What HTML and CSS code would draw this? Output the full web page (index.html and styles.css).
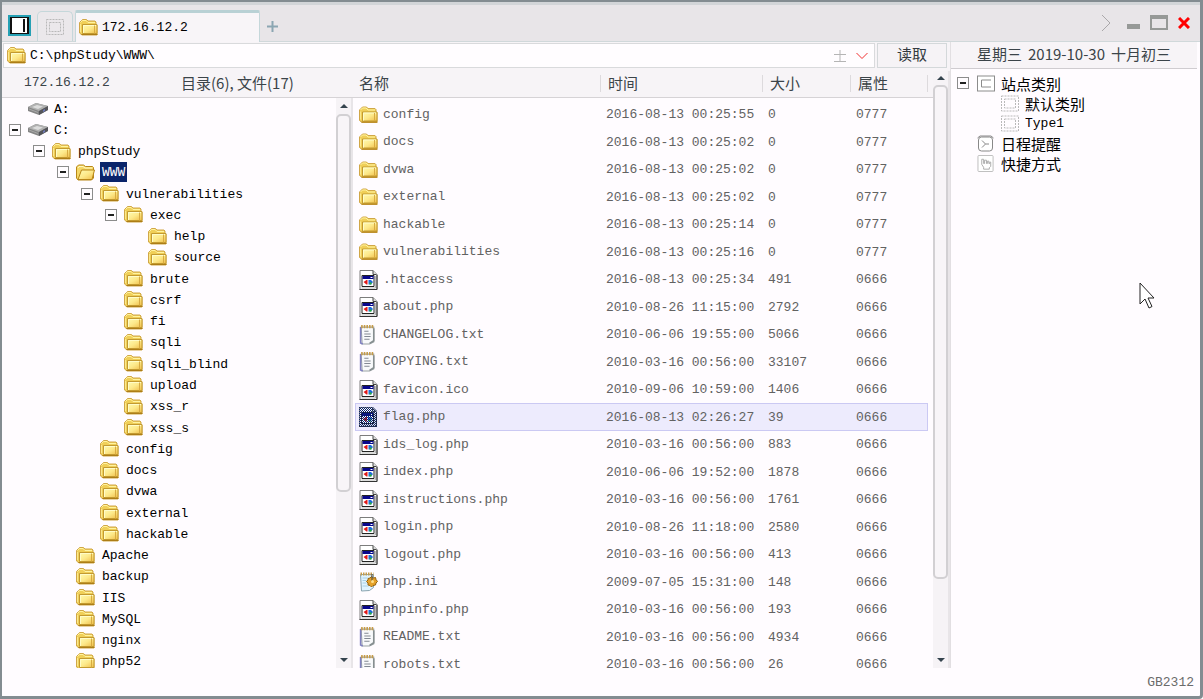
FILE: index.html
```
<!DOCTYPE html>
<html lang="zh-CN">
<head>
  <meta charset="UTF-8">
  <meta name="viewport" content="width=device-width, initial-scale=1.0">
  <title>172.16.12.2</title>
  <link rel="stylesheet" href="styles.css">
</head>
<body>
  <!-- Icons -->
  <svg class="sprite" width="0" height="0" aria-hidden="true">
    <defs>
      <linearGradient id="gold" x1="0" y1="0" x2="1" y2="1">
        <stop offset="0" stop-color="#fffcb4"/>
        <stop offset="0.5" stop-color="#fde98a"/>
        <stop offset="1" stop-color="#f0bd48"/>
      </linearGradient>
      <pattern id="dots" width="2" height="2" patternUnits="userSpaceOnUse">
        <path d="M0 0h1v1H0zM1 1h1v1H1z" fill="#0a246a"/>
      </pattern>
    </defs>
    <symbol id="folder" viewBox="0 0 19 17">
      <path d="M.5 3.500 2.500 1.500 3.500.5h4l1.500 1.500h7l1 1v3h1v10H3L.5 14z" fill="#f0cf58" stroke="#d0a748"/>
      <path d="M1.500 3.500l2-2h3.500l2 2h7" fill="none" stroke="#fff3a0"/>
      <path d="M1.500 5v8" stroke="#fbe88c"/>
      <path d="M3.500 5.500h14.500v9H3.500z" fill="url(#gold)" stroke="#c39a30"/>
      <path d="M4.500 14V6.500H17" fill="none" stroke="#fffcc8"/>
      <path d="M15.500 6.500v8" stroke="#d8ab42"/>
      <path d="M2.500 15.500h16" stroke="#ad7d16"/>
    </symbol>
    <symbol id="folder-open" viewBox="0 0 19 17">
      <path d="M.5 14V3l2-2h5l2 1.500h7l1 1V14l-2 2H2z" fill="#f5d768" stroke="#b98719"/>
      <path d="M2 15.500 5.500 6h13L16 15.500z" fill="url(#gold)" stroke="#b98719"/>
      <path d="M2 4l1-1.500h4l2 1.500h7" fill="none" stroke="#fff9c0"/>
    </symbol>
    <symbol id="drive" viewBox="0 0 20 12">
      <path d="M0 4 8 0l12 3v4l-9 5L0 8z" fill="#858585"/>
      <path d="M0 4 8 0l12 3-9 5z" fill="#b0b0b0"/>
      <path d="M4 4l5-2 6 1.500L10 6z" fill="#dcdcdc"/>
      <path d="M11 8l9-5v4l-9 5z" fill="#55555a"/>
      <path d="M15 7l2-1v2l-2 1z" fill="#6d78b8"/>
      <path d="M1 6l9 3.500" stroke="#a8a8a8"/>
    </symbol>
    <symbol id="app" viewBox="0 0 18 20">
      <path d="M.5.5h13l4 4v15H.5z" fill="#fff" stroke="#7c7c7c"/>
      <path d="M13.500.5V4.500H17" fill="#ddd" stroke="#444"/>
      <path d="M17.500 5v14.500H0" fill="none" stroke="#333"/>
      <path d="M16 6v12H2" fill="none" stroke="#b8b8b8"/>
      <path d="M2.500 5.500h12v11h-12z" fill="#fff" stroke="#222"/>
      <path d="M3 6h11v3H3z" fill="#08088c"/>
      <path d="M11 7h2v1h-2z" fill="#fff"/>
      <path d="M4 12l3-2h1v4.500H7z" fill="#e01818"/>
      <path d="M9 10h2.500l2 2-2 2.500H9z" fill="#1d6ae0"/>
      <path d="M10 12.500h2v2h-2z" fill="#28b428"/>
    </symbol>
    <symbol id="note" viewBox="0 0 18 19">
      <path d="M2 2h12v14l-4 2H3z" fill="#f8f9fb" stroke="#9aa2a4"/>
      <path d="M1.500 2v15l2 1" fill="none" stroke="#8080c0" stroke-width="1.500"/>
      <path d="M14 3v12l-4 2.500" fill="none" stroke="#868e90" stroke-width="1.500"/>
      <path d="M2 1.500h12" stroke="#c69b48" stroke-width="3" stroke-dasharray="1.500 1"/>
      <path d="M5 6h4M5 8.500h6M5 11h6M5 13.500h5" stroke="#838993"/>
    </symbol>
    <symbol id="ini" viewBox="0 0 18 20">
      <path d="M1 2.500h13v13l-4 3L2 19z" fill="#dff3ff" stroke="#8aa4b0"/>
      <path d="M1 2h13" stroke="#c69b48" stroke-width="3" stroke-dasharray="1.500 1"/>
      <path d="M3 6h5M3 8.500h4M3 11h4M3 14h6" stroke="#a9d0e4"/>
      <path d="M12 4.500 14 6l2-.5.5 2 1.500 2-1.500 1.500-.5 2-2.500.5-1.500 1.500-1.500-1.500-2-.5V11L7 9.500l1.500-1.500V6.500l2-.5z" fill="#e5a128" stroke="#94620e"/>
      <path d="M12.500 2v8" stroke="#444"/>
      <circle cx="13" cy="9.500" r="1.500" fill="#ffe08a"/>
    </symbol>
    <symbol id="dashed" viewBox="0 0 18 16">
      <rect x=".5" y=".5" width="17" height="15" fill="none" stroke="#b9b9b9" stroke-dasharray="2 1"/>
      <rect x="3.500" y="3.500" width="11" height="9" fill="none" stroke="#b9b9b9" stroke-dasharray="2 1"/>
    </symbol>
    <symbol id="category" viewBox="0 0 18 16">
      <rect x=".5" y=".5" width="17" height="15" fill="#fff" stroke="#8c8c8c"/>
      <path d="M14 4.500H4.500v7H14" fill="none" stroke="#8c8c8c"/>
    </symbol>
    <symbol id="clock" viewBox="0 0 18 16">
      <rect x="1.500" y="1.500" width="14" height="14" rx="3" fill="#fff" stroke="#888"/>
      <path d="M.5 2.500 3 .5h11l2.500 2" fill="none" stroke="#888"/>
      <path d="M5 5l3.500 3.500L5 12M8.500 8.500H12" fill="none" stroke="#888"/>
    </symbol>
    <symbol id="hand" viewBox="0 0 18 18">
      <rect x=".5" y=".5" width="16" height="17" rx="1" fill="#fff" stroke="#bbb"/>
      <path d="M6.500 15v-2L4.500 10V4.500h2V9h1V5.500h2V9h1V6.500h1.500V9h1V7.500h1V12L12.500 13.500V15z" fill="#fff" stroke="#aaa"/>
    </symbol>
  </svg>

  <div class="window">
    <!-- Title bar -->
    <header class="titlebar">
      <button class="panel-btn" aria-label="面板">
        <svg width="23" height="21" viewBox="0 0 23 21">
          <path d="M1 1h21v19H1z" fill="#111" stroke="#25a0b4" stroke-width="2"/>
          <path d="M4 3h15v15H4z" fill="#fff"/>
          <path d="M15 4h2v13h-2z" fill="#111"/>
        </svg>
      </button>
      <button class="tab tab-blank" aria-label="主页"><svg width="18" height="16"><use href="#dashed"/></svg></button>
      <button class="tab tab-active"><svg width="19" height="17"><use href="#folder"/></svg><span>172.16.12.2</span></button>
      <button class="tab-add" aria-label="新建">
        <svg width="11" height="11" viewBox="0 0 11 11"><path d="M5.500 0v11M0 5.500h11" stroke="#8ba6b2" stroke-width="2"/></svg>
      </button>
      <div class="win-controls">
        <button aria-label="更多"><svg width="10" height="18" viewBox="0 0 10 18"><path d="M1 1l8 8-8 8" fill="none" stroke="#aaa8aa"/></svg></button>
        <button aria-label="最小化"><svg width="13" height="18" viewBox="0 0 13 18"><path d="M0 10h13v5H0z" fill="#969997"/></svg></button>
        <button aria-label="最大化"><svg width="18" height="18" viewBox="0 0 18 18"><path d="M0 1h18v15H0zM2 5v9h14V5z" fill="#969997" fill-rule="evenodd"/></svg></button>
        <button aria-label="关闭"><svg width="12" height="12" viewBox="0 0 12 12"><path d="M1 1l10 10M11 1L1 11" stroke="#f00" stroke-width="3"/></svg></button>
      </div>
    </header>

    <div class="content">
      <main class="manager">
        <!-- Address -->
        <div class="address-row">
          <div class="address">
            <svg width="19" height="17"><use href="#folder"/></svg>
            <input type="text" value="C:\phpStudy\WWW\" aria-label="路径">
            <button aria-label="上级目录"><svg width="12" height="14" viewBox="0 0 12 14"><path d="M6 1v11M0 5.500h12M0 12.500h12" stroke="#b5b5b5"/></svg></button>
            <button aria-label="历史"><svg width="12" height="8" viewBox="0 0 12 8"><path d="M.5 1 6 6.500 11.500 1" fill="none" stroke="#f03030"/></svg></button>
          </div>
          <button class="read-btn">读取</button>
        </div>

        <div class="panes">
          <!-- Folder tree -->
          <section class="tree-pane">
            <div class="pane-head"><span class="host">172.16.12.2</span><span>目录(6), 文件(17)</span></div>
            <div class="tree-body">
              <ul class="tree">
                <li><svg class="drive"><use href="#drive"/></svg><a href="#">A:</a></li>
                <li><button class="toggle" aria-label="折叠"></button><svg class="drive"><use href="#drive"/></svg><a href="#">C:</a></li>
                <li class="l1"><button class="toggle" aria-label="折叠"></button><svg><use href="#folder"/></svg><a href="#">phpStudy</a></li>
                <li class="l2"><button class="toggle" aria-label="折叠"></button><svg><use href="#folder-open"/></svg><a href="#" class="current">WWW</a></li>
                <li class="l3"><button class="toggle" aria-label="折叠"></button><svg><use href="#folder"/></svg><a href="#">vulnerabilities</a></li>
                <li class="l4"><button class="toggle" aria-label="折叠"></button><svg><use href="#folder"/></svg><a href="#">exec</a></li>
                <li class="l5"><svg><use href="#folder"/></svg><a href="#">help</a></li>
                <li class="l5"><svg><use href="#folder"/></svg><a href="#">source</a></li>
                <li class="l4"><svg><use href="#folder"/></svg><a href="#">brute</a></li>
                <li class="l4"><svg><use href="#folder"/></svg><a href="#">csrf</a></li>
                <li class="l4"><svg><use href="#folder"/></svg><a href="#">fi</a></li>
                <li class="l4"><svg><use href="#folder"/></svg><a href="#">sqli</a></li>
                <li class="l4"><svg><use href="#folder"/></svg><a href="#">sqli_blind</a></li>
                <li class="l4"><svg><use href="#folder"/></svg><a href="#">upload</a></li>
                <li class="l4"><svg><use href="#folder"/></svg><a href="#">xss_r</a></li>
                <li class="l4"><svg><use href="#folder"/></svg><a href="#">xss_s</a></li>
                <li class="l3"><svg><use href="#folder"/></svg><a href="#">config</a></li>
                <li class="l3"><svg><use href="#folder"/></svg><a href="#">docs</a></li>
                <li class="l3"><svg><use href="#folder"/></svg><a href="#">dvwa</a></li>
                <li class="l3"><svg><use href="#folder"/></svg><a href="#">external</a></li>
                <li class="l3"><svg><use href="#folder"/></svg><a href="#">hackable</a></li>
                <li class="l2"><svg><use href="#folder"/></svg><a href="#">Apache</a></li>
                <li class="l2"><svg><use href="#folder"/></svg><a href="#">backup</a></li>
                <li class="l2"><svg><use href="#folder"/></svg><a href="#">IIS</a></li>
                <li class="l2"><svg><use href="#folder"/></svg><a href="#">MySQL</a></li>
                <li class="l2"><svg><use href="#folder"/></svg><a href="#">nginx</a></li>
                <li class="l2"><svg><use href="#folder"/></svg><a href="#">php52</a></li>
              </ul>
              <div class="scrollbar tree-scroll"><i class="up"></i><div class="thumb"></div><div class="rest"></div><i class="down"></i></div>
            </div>
          </section>

          <!-- File list -->
          <section class="list-pane">
            <div class="list-body">
              <table class="files">
                <colgroup><col><col class="c-time"><col class="c-size"><col class="c-attr"></colgroup>
                <thead>
                  <tr><th>名称</th><th>时间</th><th>大小</th><th>属性</th></tr>
                </thead>
                <tbody>
                  <tr><td><svg><use href="#folder"/></svg>config</td><td>2016-08-13 00:25:55</td><td>0</td><td>0777</td></tr>
                  <tr><td><svg><use href="#folder"/></svg>docs</td><td>2016-08-13 00:25:02</td><td>0</td><td>0777</td></tr>
                  <tr><td><svg><use href="#folder"/></svg>dvwa</td><td>2016-08-13 00:25:02</td><td>0</td><td>0777</td></tr>
                  <tr><td><svg><use href="#folder"/></svg>external</td><td>2016-08-13 00:25:02</td><td>0</td><td>0777</td></tr>
                  <tr><td><svg><use href="#folder"/></svg>hackable</td><td>2016-08-13 00:25:14</td><td>0</td><td>0777</td></tr>
                  <tr><td><svg><use href="#folder"/></svg>vulnerabilities</td><td>2016-08-13 00:25:16</td><td>0</td><td>0777</td></tr>
                  <tr><td><svg><use href="#app"/></svg>.htaccess</td><td>2016-08-13 00:25:34</td><td>491</td><td>0666</td></tr>
                  <tr><td><svg><use href="#app"/></svg>about.php</td><td>2010-08-26 11:15:00</td><td>2792</td><td>0666</td></tr>
                  <tr><td><svg><use href="#note"/></svg>CHANGELOG.txt</td><td>2010-06-06 19:55:00</td><td>5066</td><td>0666</td></tr>
                  <tr><td><svg><use href="#note"/></svg>COPYING.txt</td><td>2010-03-16 00:56:00</td><td>33107</td><td>0666</td></tr>
                  <tr><td><svg><use href="#app"/></svg>favicon.ico</td><td>2010-09-06 10:59:00</td><td>1406</td><td>0666</td></tr>
                  <tr class="selected"><td><svg viewBox="0 0 19 20"><use href="#app" width="18" height="20"/><path d="M0 0h14l4 4v16H0z" fill="url(#dots)"/></svg>flag.php</td><td>2016-08-13 02:26:27</td><td>39</td><td>0666</td></tr>
                  <tr><td><svg><use href="#app"/></svg>ids_log.php</td><td>2010-03-16 00:56:00</td><td>883</td><td>0666</td></tr>
                  <tr><td><svg><use href="#app"/></svg>index.php</td><td>2010-06-06 19:52:00</td><td>1878</td><td>0666</td></tr>
                  <tr><td><svg><use href="#app"/></svg>instructions.php</td><td>2010-03-16 00:56:00</td><td>1761</td><td>0666</td></tr>
                  <tr><td><svg><use href="#app"/></svg>login.php</td><td>2010-08-26 11:18:00</td><td>2580</td><td>0666</td></tr>
                  <tr><td><svg><use href="#app"/></svg>logout.php</td><td>2010-03-16 00:56:00</td><td>413</td><td>0666</td></tr>
                  <tr><td><svg><use href="#ini"/></svg>php.ini</td><td>2009-07-05 15:31:00</td><td>148</td><td>0666</td></tr>
                  <tr><td><svg><use href="#app"/></svg>phpinfo.php</td><td>2010-03-16 00:56:00</td><td>193</td><td>0666</td></tr>
                  <tr><td><svg><use href="#note"/></svg>README.txt</td><td>2010-03-16 00:56:00</td><td>4934</td><td>0666</td></tr>
                  <tr><td><svg><use href="#note"/></svg>robots.txt</td><td>2010-03-16 00:56:00</td><td>26</td><td>0666</td></tr>
                </tbody>
              </table>
            </div>
            <div class="scrollbar list-scroll"><i class="up"></i><div class="thumb"></div><div class="rest"></div><i class="down"></i></div>
          </section>
        </div>
      </main>

      <!-- Categories -->
      <aside class="side">
        <div class="date"><span>星期三</span><span>2019-10-30</span><span>十月初三</span></div>
        <ul class="tree side-tree">
          <li><button class="toggle" aria-label="折叠"></button><svg><use href="#category"/></svg><a href="#">站点类别</a></li>
          <li class="l1"><svg><use href="#dashed"/></svg><a href="#">默认类别</a></li>
          <li class="l1"><svg><use href="#dashed"/></svg><a href="#" class="latin">Type1</a></li>
          <li><svg><use href="#clock"/></svg><a href="#">日程提醒</a></li>
          <li><svg><use href="#hand"/></svg><a href="#">快捷方式</a></li>
        </ul>
      </aside>
    </div>

    <footer class="status">GB2312</footer>
  </div>

  <svg class="pointer" width="16" height="28" viewBox="0 0 16 28">
    <path d="M1 1v21l5-5 4 9 3-1.500-4-8.500h6z" fill="#fff" stroke="#222"/>
  </svg>
</body>
</html>
```
FILE: styles.css
```
* {
  box-sizing: border-box;
}

body {
  margin: 0;
  font-family: "Liberation Mono", "Noto Sans CJK SC", monospace;
  font-size: 13px;
  color: #000;
}

button {
  padding: 0;
  border: none;
  background: none;
  font: inherit;
  color: inherit;
  cursor: pointer;
}

svg {
  display: block;
  flex: none;
}

.sprite {
  position: absolute;
}

.window {
  display: flex;
  flex-direction: column;
  height: 100vh;
  background: #fffcff;
  border: 2px solid #838c91;
  border-right-width: 3px;
  border-bottom-width: 3px;
  border-radius: 0 0 4px 0;
}

/* Title bar */
.titlebar {
  display: flex;
  align-items: flex-end;
  height: 40px;
  padding-left: 6px;
  background: #e8e5e8;
  border-top: 3px solid #d2d5d8;
  border-bottom: 1px solid #d0d8da;
}

.panel-btn {
  margin: 0 6px 5px 0;
}

.tab {
  display: flex;
  align-items: center;
  height: 30px;
  border: 1px solid #c5d7da;
  border-bottom: none;
  border-radius: 5px 5px 0 0;
}

.tab-blank {
  width: 36px;
  justify-content: center;
  background: #ebe8eb;
  margin-right: 2px;
}

.tab-active {
  width: 185px;
  height: 32px;
  margin-bottom: -1px;
  padding-left: 3px;
  gap: 4px;
  background: #f8f5f8;
  border-top: 3px solid #b9d1d5;
  border-radius: 2px 2px 0 0;
}

.tab-add {
  margin: 0 0 9px 7px;
}

.win-controls {
  display: flex;
  align-items: center;
  gap: 16px;
  margin-left: auto;
  padding: 0 10px 9px 0;
}

.win-controls button:nth-child(3) {
  margin: 0 -6px;
}

/* Main area */
.content {
  display: flex;
  flex: 1;
  min-height: 0;
}

.manager {
  display: flex;
  flex-direction: column;
  flex: 1;
  min-width: 0;
  background: #f7f4f7;
}

.address-row {
  display: flex;
  gap: 2px;
  height: 29px;
  padding: 1px 3px 3px 1px;
}

.address {
  display: flex;
  flex: 1;
  align-items: center;
  gap: 4px;
  padding: 0 6px 0 3px;
  background: #fffdff;
  border: 1px solid #d9dadc;
}

.address input {
  flex: 1;
  min-width: 0;
  padding: 0;
  border: none;
  outline: none;
  background: none;
  font: inherit;
}

.address button + button {
  margin-left: 6px;
}

.read-btn {
  width: 70px;
  border: 1px solid #d4d8da;
  background: #f6f3f6;
  font-family: "Noto Sans CJK SC", sans-serif;
  font-size: 15px;
  line-height: 20px;
  padding-bottom: 3px;
  color: #333a40;
}

.panes {
  display: flex;
  flex: 1;
  min-height: 0;
  background: #fffcff;
}

.pane-head {
  display: flex;
  align-items: center;
  height: 27px;
  padding: 0 0 2px 22px;
  background: #f7f4f7;
  border-bottom: 1px solid #d6d3d6;
  font-family: "Noto Sans CJK SC", sans-serif;
  font-size: 15px;
  line-height: 22px;
  color: #3b4449;
}

.host {
  width: 157px;
  font-family: "Liberation Mono", monospace;
  font-size: 13px;
}

/* Tree */
.tree-pane {
  display: flex;
  flex-direction: column;
  width: 351px;
}

.tree-body {
  display: flex;
  flex: 1;
  min-height: 0;
  overflow: hidden;
}

.tree {
  display: grid;
  grid-auto-rows: minmax(0, 1fr);
  flex: 1;
  height: calc(100% + 4px);
  margin: 0;
  padding: 0 0 0 7px;
  list-style: none;
}

.tree li {
  display: grid;
  grid-template-columns: 19px 25px 1fr;
  align-items: center;
}

.tree li > * {
  grid-row: 1;
}

.tree svg {
  grid-column: 2;
  width: 19px;
  height: 17px;
}

.tree .drive {
  width: 20px;
  height: 12px;
}

.tree a {
  grid-column: 3;
  justify-self: start;
  padding: 1px 1px 0;
  line-height: 19px;
  color: #000;
  text-decoration: none;
}

.tree .current {
  margin-left: -1px;
  padding: 1px 2px 0;
  background: #0a246a;
  color: #fff;
}

.tree .l1 { padding-left: 24px; }
.tree .l2 { padding-left: 48px; }
.tree .l3 { padding-left: 72px; }
.tree .l4 { padding-left: 96px; }
.tree .l5 { padding-left: 120px; }

.toggle {
  width: 12px;
  height: 12px;
  border: 1px solid #8c8c8c;
  background: linear-gradient(#222, #222) center / 6px 2px no-repeat;
}

/* Scrollbars */
.scrollbar {
  display: flex;
  flex-direction: column;
  align-items: center;
  width: 17px;
  background: #f6f3f6;
  border-right: 2px solid #e8e5e8;
}

.thumb {
  width: 100%;
  background: #f8f5f8;
  border: 2px solid #d2d0d3;
  border-radius: 5px;
}

.tree-scroll .thumb { flex: 70; }
.tree-scroll .rest { flex: 30; }
.list-scroll .thumb { flex: 87; }
.list-scroll .rest { flex: 13; }

.up,
.down {
  width: 0;
  border: 4px solid transparent;
}

.up {
  margin: 6px 0;
  border-top: none;
  border-bottom-color: #34434d;
}

.list-scroll .up {
  margin: 5px 0;
}

.down {
  margin: 6px 0;
  border-bottom: none;
  border-top-color: #34434d;
}

/* File list */
.list-pane {
  display: flex;
  flex: 1;
  min-width: 0;
}

.list-body {
  flex: 1;
  min-width: 0;
  padding: 0 5px 0 2px;
  overflow: hidden;
  background: linear-gradient(#f7f4f7 26px, #d6d3d6 26px 27px, #fffcff 27px);
}

.files {
  width: 100%;
  table-layout: fixed;
  border-collapse: collapse;
  color: #626262;
}

.c-time { width: 162px; }
.c-size { width: 88px; }
.c-attr { width: 77px; }

.files th {
  height: 27px;
  padding: 0 0 4px 7px;
  text-align: left;
  font-family: "Noto Sans CJK SC", sans-serif;
  font-size: 15px;
  font-weight: normal;
  line-height: 22px;
  color: #3b4449;
  background: linear-gradient(#dddadd, #dddadd) right 4px / 1px 17px no-repeat;
}

.files th:first-child {
  padding-left: 4px;
}

.files tbody::before {
  content: "";
  display: block;
  height: 3px;
}

.files td {
  height: 27px;
  padding: 1px 0 0 5px;
  line-height: 20px;
  white-space: nowrap;
}

.files td:first-child {
  padding-left: 4px;
}

.files tr:nth-child(even) td {
  height: 28px;
}

.files td svg {
  display: inline-block;
  width: 19px;
  height: 20px;
  margin-right: 5px;
  vertical-align: middle;
}

.files .selected {
  background: #edebfd;
  outline: 1px solid #cbc9f3;
  outline-offset: -1px;
}

/* Right side */
.side {
  width: 250px;
  border-left: 1px solid #e2dfe2;
}

.date {
  display: flex;
  justify-content: center;
  gap: 6px;
  height: 27px;
  margin-right: 3px;
  background: #f7f4f7;
  border-bottom: 1px solid #cfccd0;
  font-family: "Noto Sans CJK SC", sans-serif;
  font-size: 15px;
  line-height: 23px;
  color: #3b4449;
}

.side-tree {
  height: auto;
  grid-auto-rows: 20px;
  padding: 4px 0 0 6px;
  font-family: "Noto Sans CJK SC", sans-serif;
  font-size: 15px;
}

.side-tree li {
  grid-template-columns: 20px 24px 1fr;
}

.side-tree svg {
  width: 18px;
  height: 17px;
}

.side-tree a {
  padding: 0;
}

.side-tree .latin {
  font-family: "Liberation Mono", monospace;
  font-size: 13px;
}

/* Status */
.status {
  height: 28px;
  padding: 0 6px;
  line-height: 30px;
  text-align: right;
  color: #6b6b6b;
}

/* Mouse pointer */
.pointer {
  position: absolute;
  left: 1139px;
  top: 282px;
}
```
